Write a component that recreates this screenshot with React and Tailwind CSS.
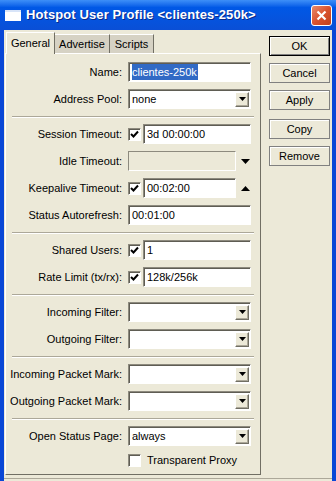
import React from 'react';

const sunken =
  'border border-t-[#8d8a7e] border-l-[#8d8a7e] border-r-white border-b-white shadow-[inset_1px_1px_0_#5f5d54]';
const raised =
  'border border-t-white border-l-white border-r-[#716f64] border-b-[#716f64] shadow-[inset_-1px_-1px_0_#aca899]';

const Tri = ({ up }) => (
  <svg width="9" height="5" viewBox="0 0 9 5">
    <path d={up ? 'M0 5 L4.5 0 L9 5 Z' : 'M0 0 L9 0 L4.5 5 Z'} fill="#000" />
  </svg>
);

const Check = ({ on }) => (
  <div className={`w-[13px] h-[13px] bg-white ${sunken} flex items-center justify-center shrink-0`}>
    {on && (
      <svg width="9" height="9" viewBox="0 0 9 9">
        <path d="M1 4 L3.5 6.5 L8 1.5" stroke="#000" strokeWidth="2" fill="none" />
      </svg>
    )}
  </div>
);

const Input = ({ className, children }) => (
  <div className={`h-[20px] bg-white ${sunken} flex items-center pl-[3px] overflow-hidden whitespace-nowrap ${className}`}>
    {children}
  </div>
);

const Combo = ({ value }) => (
  <div className={`h-[20px] w-[123px] bg-white ${sunken} flex items-center justify-between pl-[3px] pr-[1px]`}>
    <span>{value}</span>
    <div className={`w-[14px] h-[15px] bg-[#ece9d8] ${raised} flex items-center justify-center`}>
      <svg width="7" height="4" viewBox="0 0 7 4">
        <path d="M0 0 L7 0 L3.5 4 Z" fill="#000" />
      </svg>
    </div>
  </div>
);

const Row = ({ label, children }) => (
  <div className="flex items-center h-[20px]">
    <div className="w-[122px] text-right pr-[6px] whitespace-nowrap">{label}</div>
    {children}
  </div>
);

const Sep = () => (
  <div className="mx-[6px] mt-[7px] mb-[6px] border-t border-t-[#aca899] border-b border-b-white" />
);

const Btn = ({ label, def }) => (
  <div
    className={`w-[61px] h-[20px] flex items-center justify-center bg-[#ece9d8] ${
      def ? 'border border-black shadow-[inset_1px_1px_0_#fff,inset_-1px_-1px_0_#808080]' : 'border border-[#808080] shadow-[inset_1px_1px_0_#fff]'
    }`}
  >
    {label}
  </div>
);

export default function App() {
  return (
    <div className="w-[336px] h-[481px] overflow-hidden flex flex-col bg-[#ece9d8] text-[11px] text-black font-['Liberation_Sans',Arial,sans-serif]">
      <div className="h-[30px] shrink-0 flex items-center bg-linear-to-b from-[#3d8ff8] via-[#0058e6] via-[25%] to-[#0a4fd6] pl-[5px] pr-[4px]">
        <div className="w-[16px] h-[11px] bg-white border-t-[2px] border-t-[#d8e4f8] mr-[5px]" />
        <span className="text-white font-bold text-[13px] tracking-[0.1px] [text-shadow:1px_1px_0_#0a2a8a]">
          Hotspot User Profile &lt;clientes-250k&gt;
        </span>
        <div className="ml-auto w-[21px] h-[21px] rounded-[3px] border border-white bg-linear-to-br from-[#e88a6a] via-[#d9522e] to-[#c0401c] flex items-center justify-center">
          <svg width="11" height="11" viewBox="0 0 11 11">
            <path d="M1.5 1.5 L9.5 9.5 M9.5 1.5 L1.5 9.5" stroke="#fff" strokeWidth="2.2" />
          </svg>
        </div>
      </div>

      <div className="flex flex-1 min-h-0">
        <div className="w-[4px] bg-[#0a47d6] shrink-0" />
        <div className="flex-1 flex flex-col">
          <div className="flex flex-1">
            <div className="w-[256px] ml-[1px] flex flex-col">
              <div className="flex items-end h-[22px] mt-[1px] pl-[1px]">
                <div className="h-[22px] w-[49px] flex items-center justify-center border-t border-l border-white border-r border-r-[#716f64] bg-[#ece9d8] relative z-10 -mb-px">
                  General
                </div>
                <div className="h-[19px] w-[55px] flex items-center justify-center bg-[#d6d2c4] border-t border-t-white border-r border-r-[#716f64]">
                  Advertise
                </div>
                <div className="h-[19px] w-[44px] flex items-center justify-center bg-[#d6d2c4] border-t border-t-white border-r border-r-[#716f64]">
                  Scripts
                </div>
              </div>
              <div className="h-[422px] border border-t-white border-l-white border-r-[#716f64] border-b-[#716f64] pt-[8px]">
                <div className="flex flex-col gap-[7px]">
                  <Row label="Name:">
                    <Input className="w-[123px]">
                      <span className="bg-[#316ac5] text-white pr-[1px]">clientes-250k</span>
                    </Input>
                  </Row>
                  <Row label="Address Pool:">
                    <Combo value="none" />
                  </Row>
                </div>
                <Sep />
                <div className="flex flex-col gap-[7px]">
                  <Row label="Session Timeout:">
                    <Check on />
                    <Input className="w-[108px] ml-[2px]">3d 00:00:00</Input>
                  </Row>
                  <Row label="Idle Timeout:">
                    <div className={`h-[20px] w-[108px] ${sunken} bg-[#ece9d8] shadow-none`} />
                    <div className="ml-[5px]"><Tri /></div>
                  </Row>
                  <Row label="Keepalive Timeout:">
                    <Check on />
                    <Input className="w-[93px] ml-[2px]">00:02:00</Input>
                    <div className="ml-[5px]"><Tri up /></div>
                  </Row>
                  <Row label="Status Autorefresh:">
                    <Input className="w-[123px]">00:01:00</Input>
                  </Row>
                </div>
                <Sep />
                <div className="flex flex-col gap-[7px]">
                  <Row label="Shared Users:">
                    <Check on />
                    <Input className="w-[108px] ml-[2px]">1</Input>
                  </Row>
                  <Row label="Rate Limit (tx/rx):">
                    <Check on />
                    <Input className="w-[108px] ml-[2px]">128k/256k</Input>
                  </Row>
                </div>
                <Sep />
                <div className="flex flex-col gap-[7px]">
                  <Row label="Incoming Filter:">
                    <Combo value="" />
                  </Row>
                  <Row label="Outgoing Filter:">
                    <Combo value="" />
                  </Row>
                </div>
                <Sep />
                <div className="flex flex-col gap-[7px]">
                  <Row label="Incoming Packet Mark:">
                    <Combo value="" />
                  </Row>
                  <Row label="Outgoing Packet Mark:">
                    <Combo value="" />
                  </Row>
                </div>
                <Sep />
                <div className="flex flex-col gap-[7px]">
                  <Row label="Open Status Page:">
                    <Combo value="always" />
                  </Row>
                  <div className="flex items-center h-[14px] pl-[122px]">
                    <Check />
                    <span className="ml-[6px]">Transparent Proxy</span>
                  </div>
                </div>
              </div>
            </div>
            <div className="flex flex-col ml-[8px] mt-[6px]">
              <Btn label="OK" def />
              <div className="mt-[7px]"><Btn label="Cancel" /></div>
              <div className="mt-[7px]"><Btn label="Apply" /></div>
              <div className="mt-[9px]"><Btn label="Copy" /></div>
              <div className="mt-[7px]"><Btn label="Remove" /></div>
            </div>
          </div>
          <div className="h-[4px] mt-[3px] border-t border-t-[#aca899] bg-[#ece9d8]" />
        </div>
        <div className="w-[4px] bg-[#0a47d6] shrink-0" />
      </div>
    </div>
  );
}
